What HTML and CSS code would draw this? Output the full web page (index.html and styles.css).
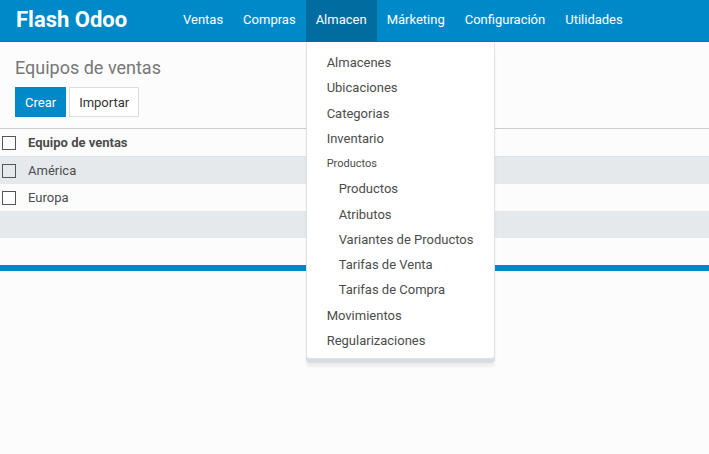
FILE: index.html
```html
<!DOCTYPE html>
<html lang="es">
  <head>
    <meta charset="UTF-8" />
    <meta name="viewport" content="width=device-width, initial-scale=1.0" />
    <title>Equipos de ventas - Flash Odoo</title>
    <link rel="stylesheet" href="styles.css">
  </head>
  <body>
    <nav class="navbar">
      <a class="brand" href="#">Flash Odoo</a>
      <ul class="menu">
        <li><a href="#">Ventas</a></li>
        <li><a href="#">Compras</a></li>
        <li class="open">
          <a href="#">Almacen</a>
          <ul class="dropdown">
            <li><a href="#">Almacenes</a></li>
            <li><a href="#">Ubicaciones</a></li>
            <li><a href="#">Categorias</a></li>
            <li><a href="#">Inventario</a></li>
            <li class="dropdown-header">Productos</li>
            <li class="sub"><a href="#">Productos</a></li>
            <li class="sub"><a href="#">Atributos</a></li>
            <li class="sub"><a href="#">Variantes de Productos</a></li>
            <li class="sub"><a href="#">Tarifas de Venta</a></li>
            <li class="sub"><a href="#">Tarifas de Compra</a></li>
            <li><a href="#">Movimientos</a></li>
            <li><a href="#">Regularizaciones</a></li>
          </ul>
        </li>
        <li><a href="#">Márketing</a></li>
        <li><a href="#">Configuración</a></li>
        <li><a href="#">Utilidades</a></li>
      </ul>
    </nav>

    <div class="control-panel">
      <h2>Equipos de ventas</h2>
      <div class="buttons">
        <button class="btn btn-primary">Crear</button>
        <button class="btn btn-default">Importar</button>
      </div>
    </div>

    <table class="list">
      <thead>
        <tr>
          <th class="check"><span class="box"></span></th>
          <th>Equipo de ventas</th>
        </tr>
      </thead>
      <tbody>
        <tr>
          <td class="check"><span class="box"></span></td>
          <td>América</td>
        </tr>
        <tr>
          <td class="check"><span class="box"></span></td>
          <td>Europa</td>
        </tr>
        <tr class="empty"><td></td><td></td></tr>
        <tr class="empty"><td></td><td></td></tr>
      </tbody>
    </table>
    <div class="list-footer"></div>
  </body>
</html>
```

FILE: styles.css
```css
:root {
  --brand: #0089c9;
  --brand-dark: #006c9f;
  --text: #4c4c4c;
  --row-alt: #e6e9ec;
}

html,
body {
  min-height: 100vh;
}

body {
  margin: 0;
  font-family: Roboto, "Liberation Sans", sans-serif;
  font-size: 13px;
  color: var(--text);
  background: #fcfcfc;
}

a {
  text-decoration: none;
  color: inherit;
}

.navbar {
  display: flex;
  align-items: stretch;
  height: 41px;
  background: var(--brand);
  border-bottom: 1px solid #0074aa;
}

.brand {
  color: white;
  font-size: 22px;
  font-weight: bold;
  padding: 0 0 0 16px;
  width: 157px;
  line-height: 40px;
}

.menu {
  display: flex;
  list-style: none;
  margin: 0;
  padding: 0;
}

.menu > li {
  position: relative;
}

.menu > li > a {
  display: block;
  padding: 0 10px;
  line-height: 40px;
  color: white;
}

.menu > li.open > a {
  background: var(--brand-dark);
  height: 42px;
}

.dropdown {
  position: absolute;
  top: 42px;
  left: 0;
  width: 187px;
  margin: 0;
  padding: 8px 0 5px;
  list-style: none;
  background: white;
  border: 1px solid #dfe3e8;
  border-top: none;
  border-radius: 0 0 4px 4px;
  box-shadow: 0 4px 0 #d9dde1, 0 8px 3px rgba(0, 0, 0, 0.06);
  z-index: 10;
}

.dropdown li a {
  display: block;
  padding: 0 20px;
  line-height: 25.27px;
}

.dropdown li.sub a {
  padding-left: 32px;
}

.dropdown-header {
  padding: 0 20px;
  font-size: 11px;
  line-height: 25.27px;
}

.control-panel {
  padding: 15px 15px 11px;
  border-bottom: 1px solid #ccc;
}

.control-panel h2 {
  margin: 0 0 8px;
  font-size: 18px;
  font-weight: normal;
  color: #777;
  line-height: 22px;
}

.buttons {
  display: flex;
  gap: 3px;
}

.btn {
  font-family: inherit;
  font-size: 13px;
  height: 30px;
  padding: 0 9px;
  border-radius: 0;
  cursor: pointer;
}

.btn-primary {
  background: var(--brand);
  border: 1px solid var(--brand);
  color: white;
}

.btn-default {
  background: white;
  border: 1px solid #ddd;
  color: #333;
}

.list {
  width: 100%;
  border-collapse: collapse;
}

.list th,
.list td {
  height: 27px;
  padding: 0;
  text-align: left;
}

.list th {
  font-weight: bold;
}

.list .check {
  width: 28px;
}

.box {
  display: block;
  width: 12px;
  height: 12px;
  margin-left: 2px;
  border: 1px solid #555;
  background: white;
}

.list tbody tr:nth-child(odd) {
  background: var(--row-alt);
}

.list tbody tr:first-child {
  border-top: 1px solid #dde1e5;
}

.list tbody tr:nth-child(odd) .box {
  background: transparent;
}

.list-footer {
  height: 6px;
  background: var(--brand);
}
```
